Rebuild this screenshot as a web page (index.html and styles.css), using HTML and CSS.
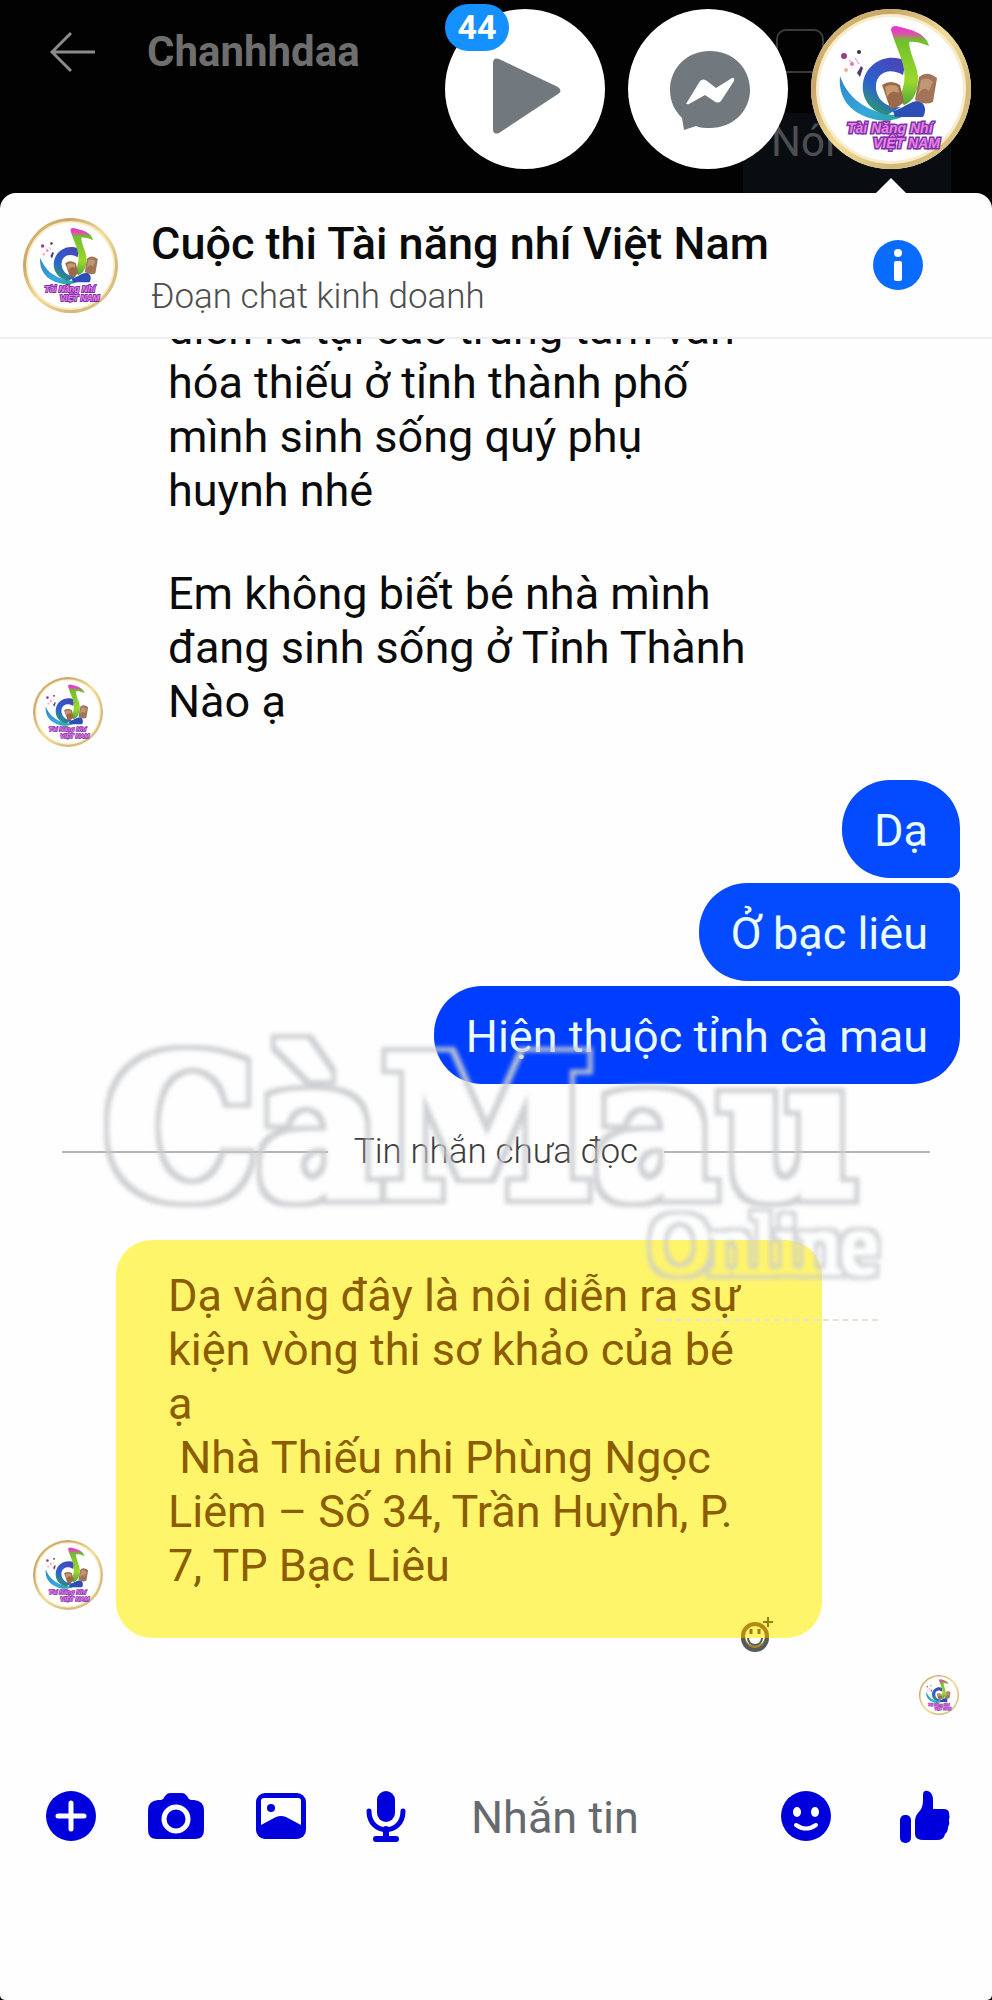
FILE: index.html
```html
<!DOCTYPE html>
<html lang="vi">
<head>
<meta charset="UTF-8" />
<meta name="viewport" content="width=device-width, initial-scale=1" />
<title>Cuộc thi Tài năng nhí Việt Nam</title>
<link rel="stylesheet" href="styles.css">
</head>
<body>
  <!-- Logo, used by every avatar -->
  <svg class="defs" aria-hidden="true">
    <defs>
      <linearGradient id="gold" x1="0" y1="0" x2="1" y2="1">
        <stop offset="0" stop-color="#e3c878" />
        <stop offset="0.25" stop-color="#c9a566" />
        <stop offset="0.5" stop-color="#f2dd97" />
        <stop offset="0.75" stop-color="#d3b878" />
        <stop offset="1" stop-color="#e8cf8c" />
      </linearGradient>
      <linearGradient id="swirl" x1="0" y1="0" x2="1" y2="1">
        <stop offset="0" stop-color="#2c86c9" />
        <stop offset="0.6" stop-color="#37a9dc" />
        <stop offset="1" stop-color="#27a08c" />
      </linearGradient>
      <linearGradient id="ring" x1="0.8" y1="0" x2="0.2" y2="1">
        <stop offset="0" stop-color="#4a44b8" />
        <stop offset="0.6" stop-color="#2b62cf" />
        <stop offset="1" stop-color="#2ea35c" />
      </linearGradient>
      <linearGradient id="note" x1="0" y1="0" x2="0" y2="1">
        <stop offset="0" stop-color="#f02be0" />
        <stop offset="0.1" stop-color="#d955a8" />
        <stop offset="0.18" stop-color="#6fc02c" />
        <stop offset="0.7" stop-color="#9bd82b" />
        <stop offset="1" stop-color="#4fa83a" />
      </linearGradient>
      <!-- soft grey outline around thickened letters -->
      <filter id="outline" x="-5%" y="-10%" width="110%" height="120%">
        <feMorphology in="SourceAlpha" operator="dilate" radius="8" result="outer" />
        <feMorphology in="SourceAlpha" operator="dilate" radius="3" result="inner" />
        <feComposite in="outer" in2="inner" operator="out" result="edge" />
        <feFlood flood-color="#c9cbcf" flood-opacity="0.9" />
        <feComposite in2="edge" operator="in" />
        <feGaussianBlur stdDeviation="2" />
      </filter>
      <filter id="outline-thin" x="-5%" y="-10%" width="110%" height="120%">
        <feMorphology in="SourceAlpha" operator="dilate" radius="6" result="outer" />
        <feMorphology in="SourceAlpha" operator="dilate" radius="2" result="inner" />
        <feComposite in="outer" in2="inner" operator="out" result="edge" />
        <feFlood flood-color="#c9cbcf" flood-opacity="0.8" />
        <feComposite in2="edge" operator="in" />
        <feGaussianBlur stdDeviation="2" />
      </filter>
      <symbol id="logo" viewBox="0 0 160 160">
        <circle cx="80" cy="80" r="80" fill="url(#gold)" />
        <circle cx="80" cy="80" r="75" fill="#f7edcb" />
        <circle cx="80" cy="80" r="72" fill="#fff" />
        <path d="M29 67C36 86 50 100 76 105C84 107 92 106 98 104C90 110 76 114 62 110C38 104 27 88 29 67Z" fill="url(#swirl)" />
        <path d="M95 52C76 43 55 54 52 74C50 90 60 103 76 106L90 98C74 100 64 88 65 76C66 64 78 58 92 66Z" fill="url(#ring)" />
        <path d="M80 21Q80 17 85 17C97 20 115 23 118 37C109 33 102 32 98 33C99 48 108 58 107 72C106 86 101 93 93 96C87 92 91 84 93 74C96 56 86 42 80 21Z" fill="url(#note)" />
        <path d="M82 102C92 100 98 92 108 92C114 94 116 102 112 108H84Z" fill="#2c4fb5" />
        <path d="M71 76Q80 70 89 76L93 92Q88 100 79 99Z" fill="#9c6a4b" />
        <path d="M74 78Q81 74 87 78L88 84Q80 80 76 88Z" fill="#c49a6e" />
        <path d="M108 68Q116 61 126 69L122 93Q114 97 104 91Z" fill="#a2755a" />
        <path d="M110 71Q117 67 122 73L118 82Q112 76 107 86Z" fill="#bf9775" />
        <g fill="#9a3f84">
          <circle cx="33" cy="47" r="3" />
          <circle cx="48" cy="43" r="2" fill="#333" />
          <circle cx="41" cy="55" r="2" fill="#ef6fb6" />
          <circle cx="35" cy="61" r="2" fill="#f0b08c" />
          <path d="M46 64l4-7 2 2-3 9z" fill="#533a75" />
          <path d="M38 51l4 3M44 49l4 6" stroke="#f08ac8" stroke-width="1" />
        </g>
        <g class="logo-text">
          <text x="36" y="124">Tài Năng Nhí</text>
          <text x="62" y="139">VIỆT NAM</text>
        </g>
      </symbol>
    </defs>
  </svg>

  <div class="backdrop">
    <a class="back" href="#" aria-label="Quay lại">
      <svg viewBox="0 0 46 42"><path d="M21 2L2 21l19 19M2 21h43" fill="none" stroke="#8c8c8c" stroke-width="3" /></svg>
    </a>
    <h2 class="back-name">Chanhhdaa</h2>
    <span class="ghost-icon"></span>
    <span class="ghost-msg">Nói</span>

    <div class="heads">
      <button class="head" aria-label="Video">
        <svg viewBox="0 0 160 160"><path d="M48 54Q48 48 54 50L113 78Q118 82 113 85L54 124Q48 126 48 120Z" fill="#72797e" /></svg>
        <span class="badge">44</span>
      </button>
      <button class="head" aria-label="Messenger">
        <svg viewBox="0 0 160 160">
          <path d="M82 42C59 42 42 59 42 81C42 93 47 102 54 109L56 121L68 117C72 119 77 119 82 119C105 119 122 102 122 81C122 59 105 42 82 42Z" fill="#72797e" />
          <path d="M58 95L72 72Q75 69 79 72L88 79L104 69Q107 68 106 72L93 92Q90 95 86 92L77 86L61 95Q58 96 58 93Z" fill="#fff" />
        </svg>
      </button>
      <button class="head active" aria-label="Cuộc thi Tài năng nhí Việt Nam">
        <svg><use href="#logo" /></svg>
      </button>
    </div>
  </div>

  <main class="sheet">
    <header class="chat-header">
      <svg class="header-avatar"><use href="#logo" /></svg>
      <div class="chat-title">
        <h1>Cuộc thi Tài năng nhí Việt Nam</h1>
        <p>Đoạn chat kinh doanh</p>
      </div>
      <button class="info" aria-label="Thông tin">
        <svg viewBox="0 0 50 50">
          <circle cx="25" cy="25" r="25" fill="#0a6cff" />
          <circle cx="25" cy="13" r="4" fill="#fff" />
          <rect x="21" y="21" width="8" height="20" rx="2" fill="#fff" />
        </svg>
      </button>
    </header>

    <section class="chat">
      <div class="row">
        <svg class="avatar"><use href="#logo" /></svg>
        <div class="message first">
          <p>diễn ra tại các trung tâm văn<br>hóa thiếu ở tỉnh thành phố<br>mình sinh sống quý phụ<br>huynh nhé</p>
          <p>Em không biết bé nhà mình<br>đang sinh sống ở Tỉnh Thành<br>Nào ạ</p>
        </div>
      </div>

      <div class="sent">
        <p>Dạ</p>
        <p>Ở bạc liêu</p>
        <p>Hiện thuộc tỉnh cà mau</p>
      </div>

      <div class="unread">Tin nhắn chưa đọc</div>

      <div class="row">
        <svg class="avatar raised"><use href="#logo" /></svg>
        <div class="message marked">
          <p>Dạ vâng đây là nôi diễn ra sự<br>kiện vòng thi sơ khảo của bé<br>ạ<br>&nbsp;Nhà Thiếu nhi Phùng Ngọc<br>Liêm – Số 34, Trần Huỳnh, P.<br>7, TP Bạc Liêu</p>
          <button class="react" aria-label="Bày tỏ cảm xúc">
            <svg viewBox="0 0 34 36">
              <circle cx="15" cy="20" r="12" fill="none" stroke="#b58a14" stroke-width="4" />
              <path d="M3 22a12 12 0 0 0 24 0" fill="none" stroke="#555a5f" stroke-width="4" />
              <path d="M7 22h16a8 8 0 0 1-16 0z" fill="#555a5f" />
              <path d="M9 22h12a6 6 0 0 1-12 0z" fill="#fff" />
              <path d="M11 13v5M19 13v5" stroke="#a37a10" stroke-width="3" />
              <path d="M28 1v10M23 6h10" stroke="#a37a10" stroke-width="2" />
            </svg>
          </button>
        </div>
      </div>

      <svg class="seen"><use href="#logo" /></svg>

      <div class="watermark" aria-hidden="true">
        <div class="wm-name">CàMau</div>
        <div class="wm-sub">Online</div>
        <div class="wm-line"></div>
      </div>
    </section>

    <form class="composer">
      <button type="button" aria-label="Thêm">
        <svg viewBox="0 0 56 56"><circle cx="28" cy="28" r="25" fill="currentColor" /><path d="M28 15v26M15 28h26" stroke="#fff" stroke-width="5" stroke-linecap="round" /></svg>
      </button>
      <button type="button" aria-label="Máy ảnh">
        <svg viewBox="0 0 56 56">
          <path d="M10 12H13Q16 11 17 8Q19 5 22 5H34Q37 5 39 8Q40 11 43 12H46Q56 13 56 22V42Q56 51 47 51H9Q0 51 0 42V22Q0 13 10 12Z" fill="currentColor" />
          <circle cx="28" cy="31" r="12" fill="none" stroke="#fff" stroke-width="5" />
        </svg>
      </button>
      <button type="button" aria-label="Thư viện ảnh">
        <svg viewBox="0 0 56 56">
          <rect x="3" y="5" width="50" height="46" rx="9" fill="currentColor" />
          <path d="M8 13Q8 10 11 10H45Q48 10 48 13V37L33 29Q28 27 23 29L8 37Z" fill="#fff" />
          <circle cx="18" cy="20" r="4" fill="currentColor" />
        </svg>
      </button>
      <button type="button" aria-label="Ghi âm">
        <svg viewBox="0 0 56 56">
          <rect x="19" y="3" width="18" height="31" rx="9" fill="currentColor" />
          <path d="M11 23C11 48 45 48 45 23" fill="none" stroke="currentColor" stroke-width="5" stroke-linecap="round" />
          <path d="M28 41v9M18 51h20" stroke="currentColor" stroke-width="6" stroke-linecap="round" />
        </svg>
      </button>
      <input type="text" aria-label="Nhắn tin" placeholder="Nhắn tin" />
      <button type="button" aria-label="Biểu tượng cảm xúc">
        <svg viewBox="0 0 56 56">
          <circle cx="28" cy="28" r="25" fill="currentColor" />
          <ellipse cx="19" cy="24" rx="4" ry="5" fill="#fff" /><ellipse cx="37" cy="24" rx="4" ry="5" fill="#fff" />
          <path d="M18 37Q28 44 38 37" fill="none" stroke="#fff" stroke-width="4" stroke-linecap="round" />
        </svg>
      </button>
      <button type="button" aria-label="Thích">
        <svg viewBox="0 0 56 56">
          <rect x="3" y="27" width="11" height="28" rx="5" fill="currentColor" />
          <path d="M18 32Q18 28 21 25Q26 20 26 13V7Q26 2 31 3Q36 5 36 12Q36 17 36 21H46Q52 21 52 25Q53 29 52 32Q53 36 51 39Q51 44 48 46Q47 52 40 52H27Q18 52 18 46Z" fill="currentColor" />
        </svg>
      </button>
    </form>
  </main>
</body>
</html>
```

FILE: styles.css
```css
* {
  box-sizing: border-box;
}
body {
  margin: 0;
  min-height: 100vh;
  display: flex;
  flex-direction: column;
  background-color: #020202;
  color: #0b0b0b;
  font-family: Roboto, 'Noto Sans', sans-serif;
}
h1, h2, p {
  margin: 0;
  font-weight: 400;
}
button {
  padding: 0;
  border: none;
  background: none;
  cursor: pointer;
}
svg {
  display: block;
}
.defs {
  position: absolute;
  width: 0;
  height: 0;
}
.logo-text {
  font: italic 900 14px 'Liberation Sans', sans-serif;
  fill: #ee7fe6;
  stroke: #7a35a8;
  stroke-width: 3px;
  paint-order: stroke;
}

/* dimmed screen behind the chat */
.backdrop {
  position: relative;
  display: flex;
  height: 193px;
  padding: 9px 21px 0 50px;
}
.back {
  width: 46px;
  height: 42px;
  margin-top: 22px;
}
.back-name {
  margin: 20px 0 0 51px;
  font-size: 42px;
  line-height: 46px;
  font-weight: 700;
  color: #6e6e6e;
}
.ghost-icon {
  position: absolute;
  right: 168px;
  top: 29px;
  width: 48px;
  height: 44px;
  border: 2px solid #3a3a3a;
  border-radius: 10px;
}
.ghost-msg {
  position: absolute;
  right: 41px;
  top: 113px;
  width: 208px;
  height: 80px;
  padding-left: 28px;
  border-radius: 8px 8px 0 0;
  background-color: #090d12;
  color: #4c4f52;
  font-size: 42px;
  line-height: 58px;
}
.heads {
  display: flex;
  gap: 23px;
  margin-left: auto;
}
.head {
  position: relative;
  width: 160px;
  height: 160px;
  border-radius: 50%;
  background-color: #fff;
}
.head svg {
  width: 160px;
  height: 160px;
}
.badge {
  position: absolute;
  left: 0;
  top: -5px;
  width: 64px;
  height: 47px;
  border-radius: 24px;
  background-color: #1590ff;
  color: #fff;
  font: 700 34px/47px Roboto, sans-serif;
}
.active::after {
  content: "";
  position: absolute;
  left: 64px;
  top: 169px;
  border: 16px solid transparent;
  border-top: 0;
  border-bottom-color: #fff;
}

/* chat sheet */
.sheet {
  flex: 1;
  background-color: #fefefe;
  border-radius: 16px 16px 5px 5px;
}
.chat-header {
  display: flex;
  align-items: center;
  height: 146px;
  padding: 0 69px 0 23px;
  border-bottom: 2px solid #eeeef2;
}
.header-avatar {
  width: 95px;
  height: 95px;
}
.chat-title {
  flex: 1;
  padding: 10px 0 0 33px;
}
.chat-title h1 {
  font-size: 45px;
  line-height: 54px;
  font-weight: 500;
}
.chat-title p {
  font-size: 35px;
  line-height: 52px;
  font-weight: 300;
  color: #4d4d4d;
}
.info, .info svg {
  width: 50px;
  height: 50px;
}
.chat {
  position: relative;
  overflow: hidden;
}
.row {
  display: flex;
  align-items: flex-end;
  gap: 13px;
  padding-left: 33px;
}
.avatar {
  flex: none;
  width: 70px;
  height: 72px;
}
.raised {
  margin-bottom: 27px;
}
.message {
  position: relative;
  width: 706px;
  max-width: 80%;
  padding: 29px 0 45px 52px;
  font-size: 45px;
  line-height: 54px;
}
.message p + p {
  margin-top: 49px;
}
.first {
  margin-top: -37px;
  padding-top: 0;
  padding-bottom: 19px;
}
.marked {
  border-radius: 36px;
  background-color: #fff56b;
  color: #8c5c00;
}
.react {
  position: absolute;
  right: 48px;
  bottom: -14px;
}
.react svg {
  width: 34px;
  height: 36px;
}
.sent {
  display: flex;
  flex-direction: column;
  align-items: flex-end;
  gap: 5px;
  margin-top: 32px;
  padding-right: 32px;
}
.sent p {
  padding: 24px 32px 20px;
  border-radius: 48px 12px 12px 48px;
  background-color: #044aff;
  color: #e8fbff;
  font-size: 45px;
  line-height: 54px;
}
.sent p:first-child {
  border-top-right-radius: 48px;
}
.sent p:last-child {
  border-bottom-right-radius: 48px;
  background-color: #003eff;
}
.unread {
  display: flex;
  align-items: center;
  gap: 26px;
  margin: 48px 62px 68px;
  font-size: 35px;
  line-height: 40px;
  font-weight: 300;
  color: #3c3c3c;
}
.unread::before, .unread::after {
  content: "";
  flex: 1;
  height: 2px;
  background-color: #b4b4b4;
}
.seen {
  width: 40px;
  height: 42px;
  margin: 36px 33px 0 auto;
}

/* newspaper mark over the messages */
.watermark {
  position: absolute;
  left: 104px;
  top: 700px;
  width: 774px;
  pointer-events: none;
}
.wm-name {
  font: 700 192px/180px 'DejaVu Serif', serif;
  filter: url(#outline);
}
.wm-sub {
  text-align: right;
  font: 400 84px/52px 'Liberation Serif', serif;
  filter: url(#outline-thin);
}
.wm-line {
  margin: 48px 0 0 552px;
  border-top: 2px dashed #e6e2d4;
}

.composer {
  display: flex;
  align-items: center;
  gap: 49px;
  padding: 70px 39px 60px 43px;
}
.composer button {
  flex: none;
  width: 56px;
  height: 56px;
  color: #0000dc;
}
.composer button:last-child {
  margin-left: 14px;
}
.composer input {
  flex: 1;
  min-width: 0;
  padding: 4px 0 0 8px;
  border: none;
  outline: none;
  background: none;
  font: 400 45px/56px Roboto, sans-serif;
}
.composer input::placeholder {
  color: #66696e;
  opacity: 1;
}
```
